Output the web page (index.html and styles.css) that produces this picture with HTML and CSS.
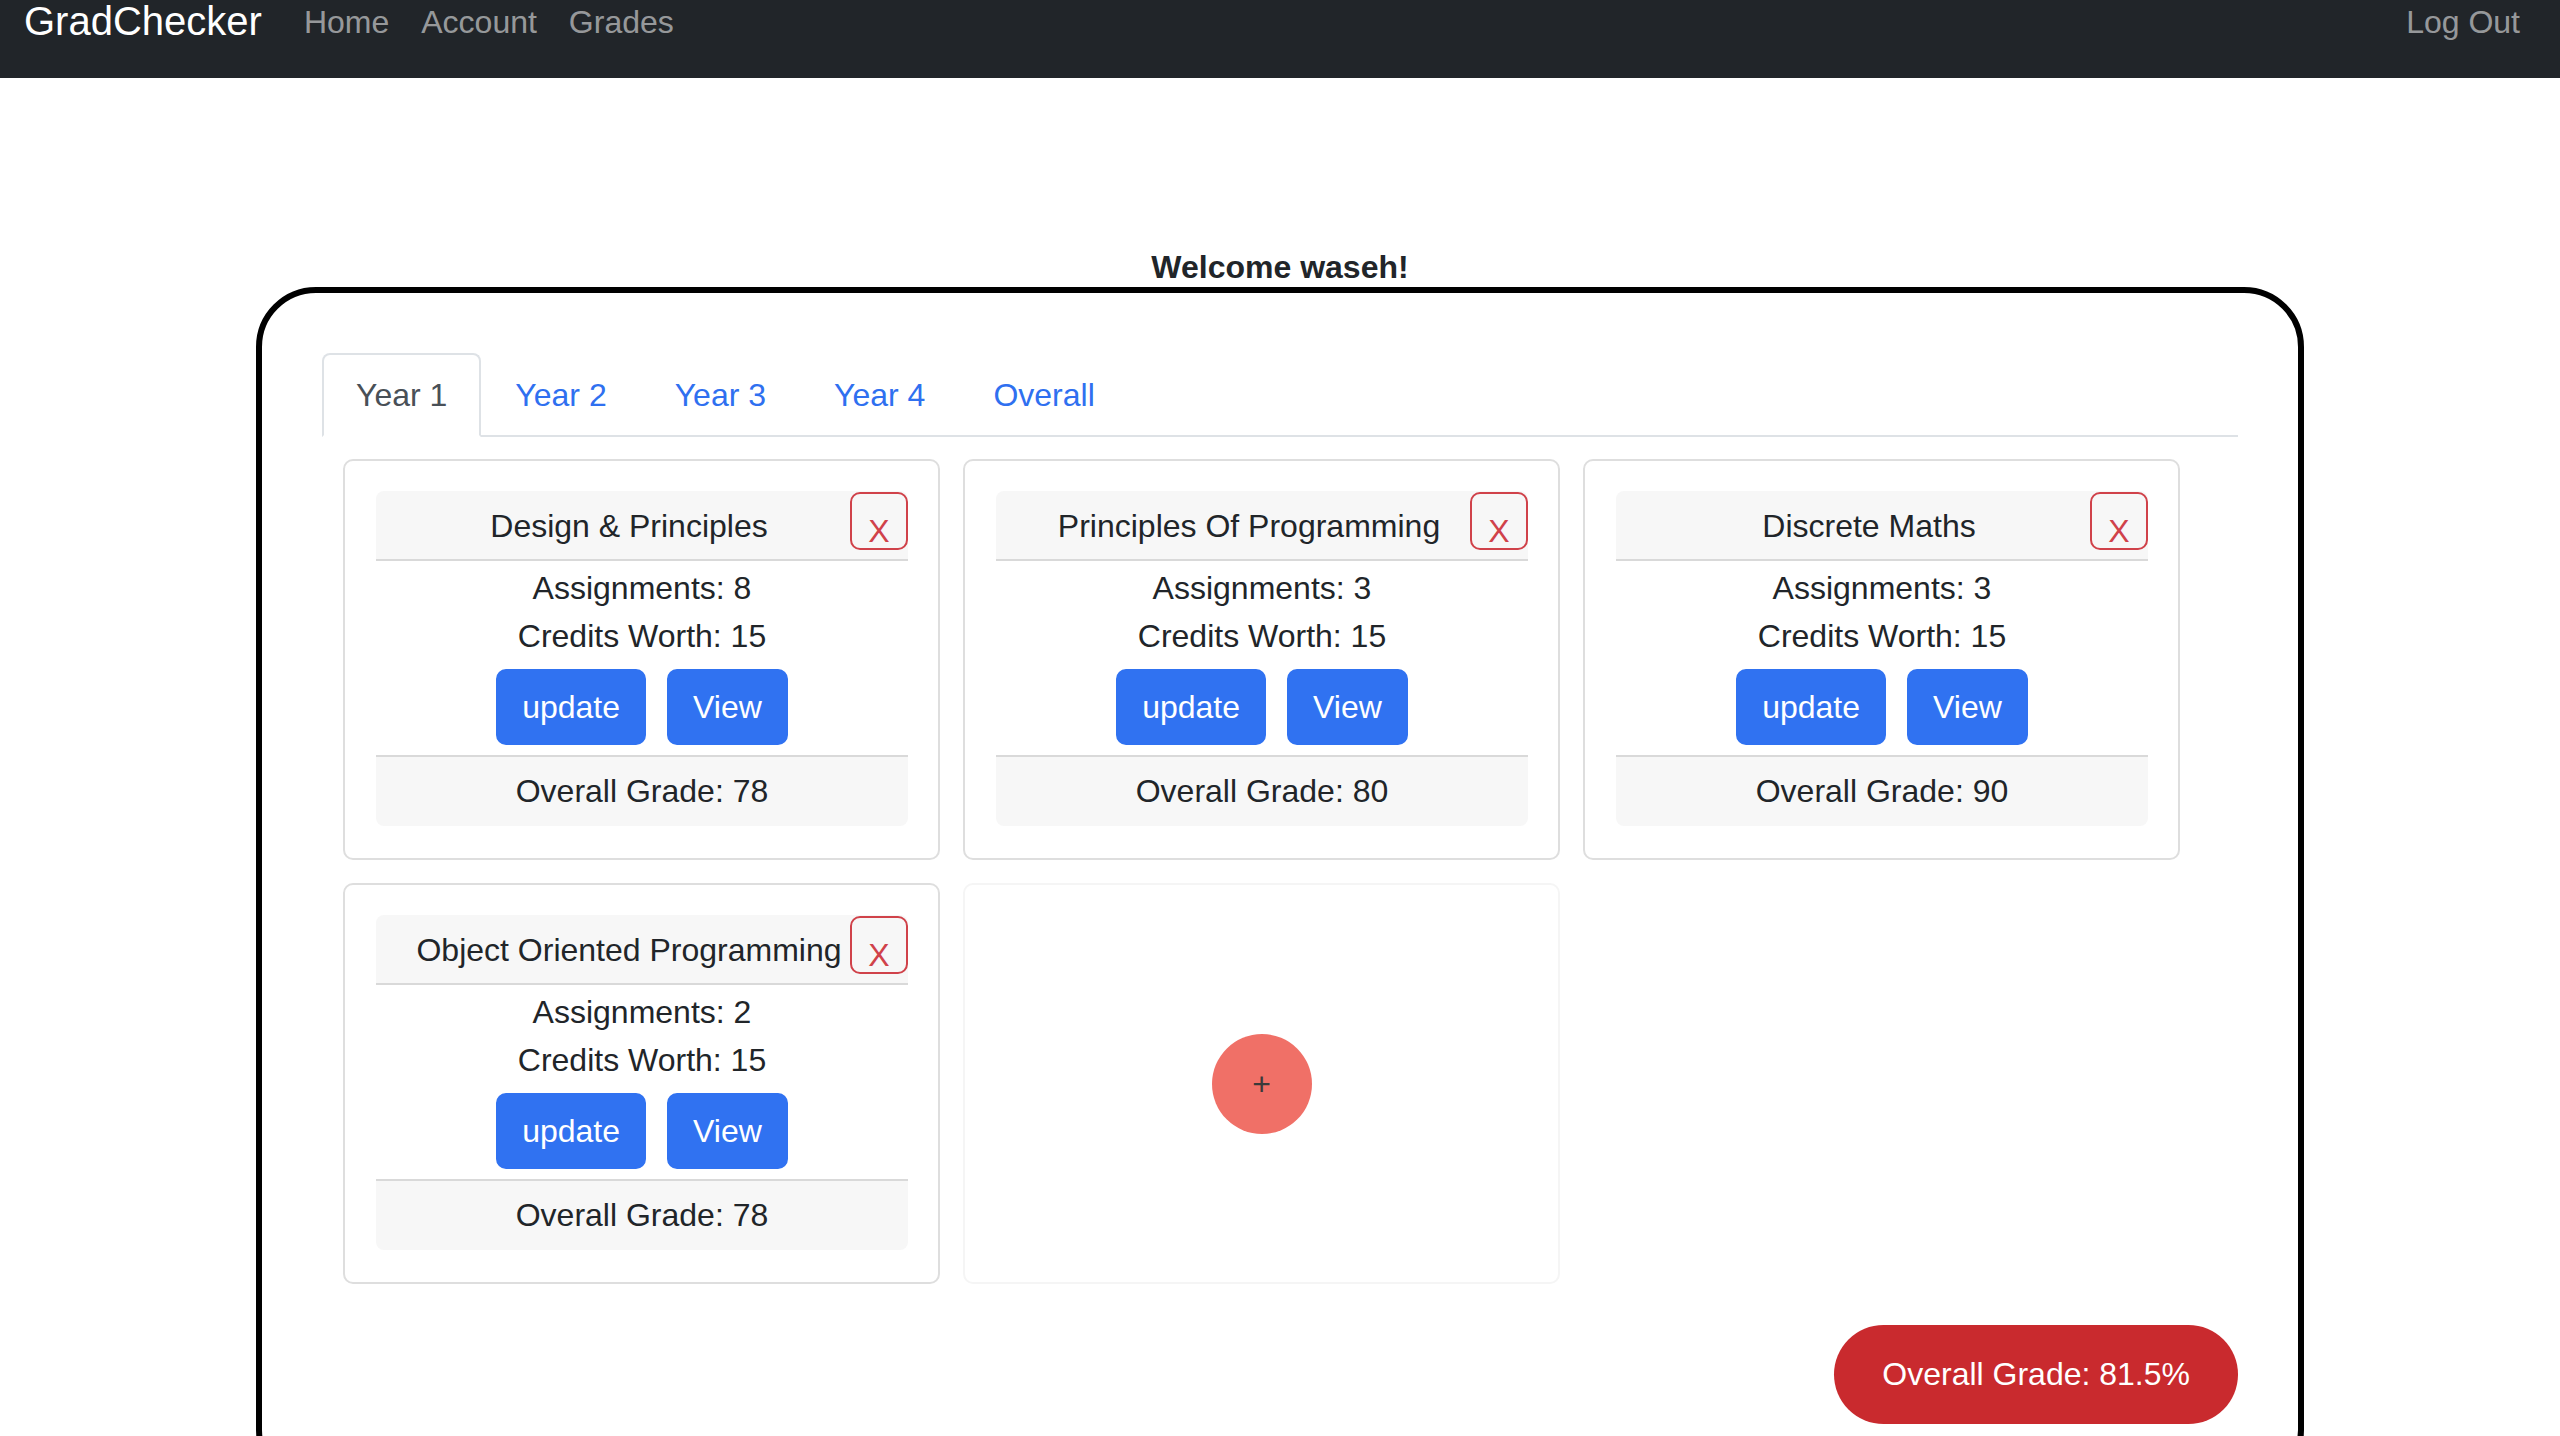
FILE: index.html
```html
<!DOCTYPE html>
<html lang="en">
<head>
<meta charset="utf-8">
<title>GradChecker</title>
<link rel="stylesheet" href="styles.css">
</head>
<body>
<nav class="navbar">
  <a class="brand" href="#">GradChecker</a>
  <ul class="nav-links">
    <li><a href="#">Home</a></li>
    <li><a href="#">Account</a></li>
    <li><a href="#">Grades</a></li>
  </ul>
  <a class="logout" href="#">Log Out</a>
</nav>
<main>
  <h1 class="welcome">Welcome waseh!</h1>
  <section class="panel">
    <ul class="tabs">
      <li><a class="tab active" href="#">Year 1</a></li>
      <li><a class="tab" href="#">Year 2</a></li>
      <li><a class="tab" href="#">Year 3</a></li>
      <li><a class="tab" href="#">Year 4</a></li>
      <li><a class="tab" href="#">Overall</a></li>
    </ul>
    <div class="modules">
      <article class="module-card">
        <div class="module">
          <header class="module-head"><span class="module-title">Design &amp; Principles</span><button class="btn-remove">X</button></header>
          <div class="module-body">
            <p>Assignments: 8</p>
            <p>Credits Worth: 15</p>
            <div class="actions"><button class="btn">update</button><button class="btn">View</button></div>
          </div>
          <footer class="module-foot">Overall Grade: 78</footer>
        </div>
      </article>
      <article class="module-card">
        <div class="module">
          <header class="module-head"><span class="module-title">Principles Of Programming</span><button class="btn-remove">X</button></header>
          <div class="module-body">
            <p>Assignments: 3</p>
            <p>Credits Worth: 15</p>
            <div class="actions"><button class="btn">update</button><button class="btn">View</button></div>
          </div>
          <footer class="module-foot">Overall Grade: 80</footer>
        </div>
      </article>
      <article class="module-card">
        <div class="module">
          <header class="module-head"><span class="module-title">Discrete Maths</span><button class="btn-remove">X</button></header>
          <div class="module-body">
            <p>Assignments: 3</p>
            <p>Credits Worth: 15</p>
            <div class="actions"><button class="btn">update</button><button class="btn">View</button></div>
          </div>
          <footer class="module-foot">Overall Grade: 90</footer>
        </div>
      </article>
      <article class="module-card">
        <div class="module">
          <header class="module-head"><span class="module-title">Object Oriented Programming</span><button class="btn-remove">X</button></header>
          <div class="module-body">
            <p>Assignments: 2</p>
            <p>Credits Worth: 15</p>
            <div class="actions"><button class="btn">update</button><button class="btn">View</button></div>
          </div>
          <footer class="module-foot">Overall Grade: 78</footer>
        </div>
      </article>
      <div class="add-card"><button class="add-btn">+</button></div>
    </div>
    <div class="summary"><span class="overall-badge">Overall Grade: 81.5%</span></div>
  </section>
</main>
</body>
</html>
```

FILE: styles.css
```css
html {
  scrollbar-width: none;
}
html::-webkit-scrollbar {
  display: none;
}
* {
  box-sizing: border-box;
}
body {
  margin: 0;
  font-family: "Liberation Sans", Arial, sans-serif;
  font-size: 32px;
  line-height: 48px;
  color: #212529;
  background: #fff;
}

/* navbar */
.navbar {
  display: flex;
  align-items: flex-start;
  height: 78px;
  padding: 0 24px;
  background: #212529;
}
.brand {
  font-size: 40px;
  line-height: 40px;
  padding-top: 1px;
  margin-right: 26px;
  color: #fff;
  text-decoration: none;
}
.nav-links {
  display: flex;
  flex: 1;
  list-style: none;
  margin: 0;
  padding: 0;
}
.nav-links a,
.logout {
  display: block;
  padding: 6px 16px 0;
  font-size: 32px;
  line-height: 32px;
  color: rgba(255, 255, 255, 0.55);
  text-decoration: none;
}

/* heading */
.welcome {
  margin: 170px 0 0;
  font-size: 32px;
  line-height: 39px;
  font-weight: 700;
  text-align: center;
}

/* outer panel */
.panel {
  width: 2048px;
  margin: 0 auto;
  border: 6px solid #000;
  border-radius: 60px;
  padding: 60px 60px 60px;
}

/* tabs */
.tabs {
  display: flex;
  list-style: none;
  margin: 0;
  padding: 0;
  border-bottom: 2px solid #dee2e6;
}
.tab {
  display: block;
  padding: 16px 32px;
  margin-bottom: -2px;
  border: 2px solid transparent;
  border-radius: 8px 8px 0 0;
  color: #2f70f0;
  text-decoration: none;
}
.tab.active {
  color: #495057;
  background: #fff;
  border-color: #dee2e6 #dee2e6 #fff;
}

/* module grid */
.modules {
  display: grid;
  grid-template-columns: repeat(3, 597px);
  gap: 23px;
  padding-left: 21px;
  margin-top: 22px;
}
.module-card {
  border: 2px solid #dedede;
  border-radius: 10px;
  padding: 30px 30px 32px 31px;
}
.module {
  border-radius: 8px;
  overflow: hidden;
}
.module-head {
  display: flex;
  align-items: flex-start;
  padding-left: 32px;
  background: #f7f7f7;
  border-bottom: 2px solid #d9d9d9;
}
.module-title {
  flex: 1;
  padding: 11px 0 9px;
  text-align: center;
  white-space: nowrap;
}
.btn-remove {
  flex-shrink: 0;
  width: 58px;
  height: 58px;
  margin-top: 1px;
  padding: 20px 0 0;
  border: 2px solid #d0424a;
  border-radius: 10px;
  background: transparent;
  color: #d0424a;
  font-family: inherit;
  font-size: 32px;
  line-height: 32px;
  text-align: center;
}
.module-body {
  padding: 3px 0 10px;
  text-align: center;
}
.module-body p {
  margin: 0;
}
.actions {
  display: flex;
  justify-content: center;
  gap: 21px;
  margin-top: 9px;
}
.btn {
  padding: 12px 24px;
  border: 2px solid #3072f1;
  border-radius: 10px;
  background: #3072f1;
  color: #fff;
  font-family: inherit;
  font-size: 32px;
  line-height: 48px;
}
.module-foot {
  padding: 10px 0 11px;
  background: #f7f7f7;
  border-top: 2px solid #d9d9d9;
  text-align: center;
}

/* add card */
.add-card {
  display: flex;
  align-items: center;
  justify-content: center;
  border: 2px solid #f5f5f5;
  border-radius: 10px;
}
.add-btn {
  width: 100px;
  height: 100px;
  border: none;
  border-radius: 50%;
  background: #f07067;
  color: #3a3a3a;
  font-family: inherit;
  font-size: 32px;
  line-height: 32px;
  padding: 0;
}

/* summary badge */
.summary {
  display: flex;
  justify-content: flex-end;
  margin-top: 41px;
}
.overall-badge {
  padding: 25px 48px;
  border-radius: 50px;
  background: #c92a2e;
  color: #fff;
  line-height: 49px;
}
```
